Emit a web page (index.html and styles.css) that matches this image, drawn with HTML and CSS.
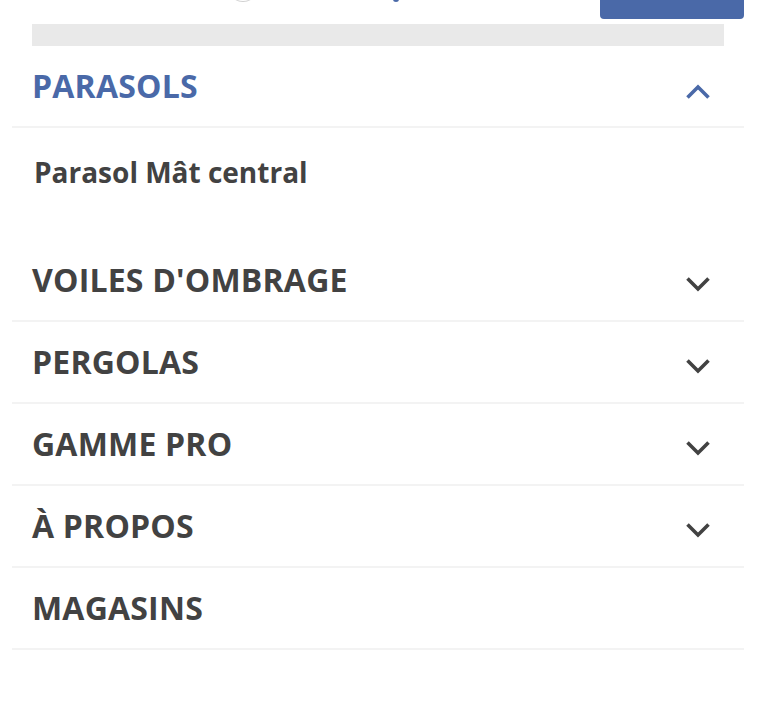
FILE: index.html
```html
<!DOCTYPE html>
<html lang="fr">
<head>
<meta charset="utf-8">
<title>Menu</title>
<link rel="stylesheet" href="styles.css">
</head>
<body>
<div class="page">
  <header class="topbar">
    <span class="logo-arc"></span>
    <span class="logo-dot"></span>
    <span class="top-btn"></span>
  </header>
  <div class="search-bar"></div>
  <nav class="menu">
    <div class="item open">
      <div class="item-head">
        <span class="label">PARASOLS</span>
        <svg class="chev" width="26" height="16" viewBox="0 0 26 16"><path d="M2.5 13.5 L13 3 L23.5 13.5" fill="none" stroke="currentColor" stroke-width="3.6"/></svg>
      </div>
      <div class="sub">
        <a class="sub-link">Parasol Mât central</a>
      </div>
    </div>
    <div class="item">
      <div class="item-head">
        <span class="label">VOILES D'OMBRAGE</span>
        <svg class="chev" width="26" height="16" viewBox="0 0 26 16"><path d="M2.5 2.5 L13 13 L23.5 2.5" fill="none" stroke="currentColor" stroke-width="3.6"/></svg>
      </div>
    </div>
    <div class="item">
      <div class="item-head">
        <span class="label">PERGOLAS</span>
        <svg class="chev" width="26" height="16" viewBox="0 0 26 16"><path d="M2.5 2.5 L13 13 L23.5 2.5" fill="none" stroke="currentColor" stroke-width="3.6"/></svg>
      </div>
    </div>
    <div class="item">
      <div class="item-head">
        <span class="label">GAMME PRO</span>
        <svg class="chev" width="26" height="16" viewBox="0 0 26 16"><path d="M2.5 2.5 L13 13 L23.5 2.5" fill="none" stroke="currentColor" stroke-width="3.6"/></svg>
      </div>
    </div>
    <div class="item">
      <div class="item-head">
        <span class="label">À PROPOS</span>
        <svg class="chev" width="26" height="16" viewBox="0 0 26 16"><path d="M2.5 2.5 L13 13 L23.5 2.5" fill="none" stroke="currentColor" stroke-width="3.6"/></svg>
      </div>
    </div>
    <div class="item">
      <div class="item-head">
        <span class="label">MAGASINS</span>
      </div>
    </div>
  </nav>
</div>
</body>
</html>
```
FILE: styles.css
```css
html, body {
  margin: 0;
  padding: 0;
  background: #ffffff;
}
body {
  font-family: "Open Sans", "Noto Sans", sans-serif;
  color: #424242;
}
.page {
  width: 756px;
}
.topbar {
  position: relative;
  height: 24px;
}
.logo-arc {
  position: absolute;
  left: 228px;
  top: -14px;
  width: 30px;
  height: 15px;
  border-bottom: 1px solid #d0d0d0;
  border-radius: 0 0 15px 15px;
}
.logo-dot {
  position: absolute;
  left: 393px;
  top: -3px;
  width: 6px;
  height: 5px;
  border-radius: 50%;
  background: #4a69a8;
}
.top-btn {
  position: absolute;
  left: 600px;
  top: 0;
  width: 144px;
  height: 19px;
  background: #4a69a8;
  border-radius: 0 0 4px 4px;
}
.search-bar {
  margin: 0 32px;
  height: 22px;
  background: #e9e9e9;
}
.menu {
  margin: 0 12px;
}
.item {
  border-bottom: 2px solid #f3f3f3;
}
.item.open {
  border-bottom: none;
}
.item-head {
  height: 80px;
  display: flex;
  align-items: center;
  justify-content: space-between;
  padding: 0 33px 0 20px;
}
.item.open .item-head {
  border-bottom: 2px solid #f3f3f3;
  color: #4a69a8;
}
.label {
  font-size: 32px;
  font-weight: 700;
  letter-spacing: 0.2px;
  line-height: 1;
}
.chev {
  display: block;
  margin-top: 8px;
}
.item.open .chev {
  margin-top: 12px;
}
.sub {
  height: 112px;
  padding: 0 22px;
  box-sizing: border-box;
  padding-top: 30px;
}
.sub-link {
  display: block;
  font-size: 28px;
  font-weight: 700;
  color: #424242;
  line-height: 28px;
}
```
